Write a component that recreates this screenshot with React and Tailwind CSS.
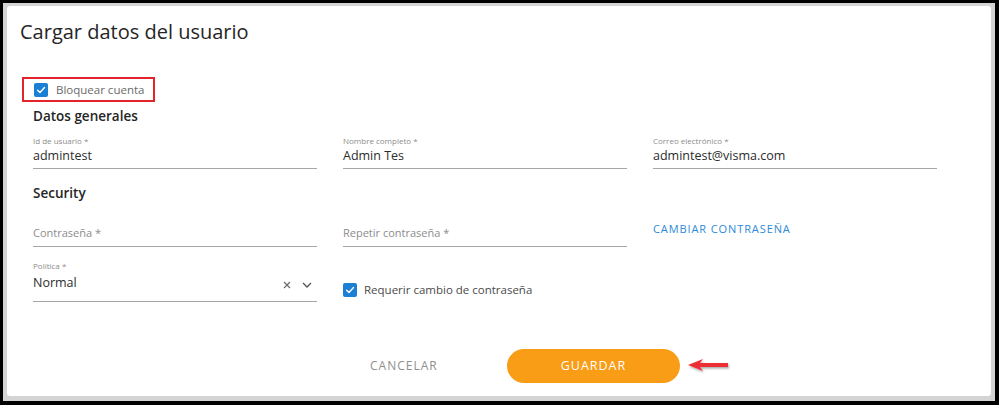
import React from 'react';

const font = { fontFamily: '"Open Sans", "Noto Sans", sans-serif' };

function Check({ className = '' }) {
  return (
    <span className={`flex h-[14px] w-[14px] items-center justify-center rounded-[2px] bg-[#1b7fd4] ${className}`}>
      <svg width="10" height="10" viewBox="0 0 10 10" fill="none">
        <path d="M1.6 5.2 L4 7.4 L8.5 2.6" stroke="white" strokeWidth="1.4" strokeLinecap="round" strokeLinejoin="round" />
      </svg>
    </span>
  );
}

function Field({ label, value }) {
  return (
    <div className="pt-[9px]">
      <div className="h-[12px] text-[8px] leading-[12px] text-[#8c8c8c]">{label}</div>
      <div className="h-[18px] border-b border-[#a6a6a6] pb-[3px] text-[12.5px] leading-[18px] text-[#2c2c2c] box-content">
        {value}
      </div>
    </div>
  );
}

function Placeholder({ text }) {
  return (
    <div className="pt-[21px]">
      <div className="h-[18px] border-b border-[#a6a6a6] pb-[4px] text-[11px] leading-[18px] text-[#8c8c8c] box-content">
        {text}
      </div>
    </div>
  );
}

export default function App() {
  return (
    <div className="h-[405px] w-[999px] bg-black pb-[4px] pl-[3px] pr-[4px] pt-[3px]" style={font}>
      <div className="h-full w-full bg-[#d4d4d4] pb-[5px] pl-[4px] pr-[4px] pt-[3px]">
        <div className="h-full w-full rounded-[3px] bg-white">
          {/* Title */}
          <div className="pl-[13px] pt-[12px] text-[20px] leading-[28px] text-[#252525]">Cargar datos del usuario</div>

          {/* Bloquear cuenta */}
          <div className="ml-[15px] mt-[31px] flex h-[25px] w-[133px] items-center border-2 border-[#e3242b] pl-[10px]">
            <Check />
            <span className="ml-[8px] text-[11.5px] text-[#6a6a6a]">Bloquear cuenta</span>
          </div>

          <div className="pl-[26px]">
            <div className="mt-[4px] h-[20px] text-[13.5px] font-semibold leading-[20px] text-[#252525]">Datos generales</div>

            <div className="grid grid-cols-[284px_284px_284px] gap-x-[26px]">
              <Field label="Id de usuario *" value="admintest" />
              <Field label="Nombre completo *" value="Admin Tes" />
              <Field label="Correo electrónico *" value="admintest@visma.com" />
            </div>

            <div className="mt-[14px] h-[20px] text-[13.5px] font-semibold leading-[20px] text-[#252525]">Security</div>

            <div className="grid grid-cols-[284px_284px_284px] gap-x-[26px]">
              <Placeholder text="Contraseña *" />
              <Placeholder text="Repetir contraseña *" />
              <div className="pt-[17px] text-[11px] leading-[18px] tracking-[0.9px] text-[#2e8ad8]">CAMBIAR CONTRASEÑA</div>
            </div>

            <div className="grid grid-cols-[284px_284px_284px] gap-x-[26px]">
              <div className="pt-[13px]">
                <div className="h-[12px] text-[8px] leading-[12px] text-[#8c8c8c]">Política *</div>
                <div className="mt-[2px] flex h-[18px] items-center border-b border-[#a6a6a6] pb-[9px] box-content">
                  <span className="flex-1 text-[12.5px] leading-[18px] text-[#2c2c2c]">Normal</span>
                  <svg width="8" height="8" viewBox="0 0 8 8" className="mr-[11px] mt-[4px]">
                    <path d="M1 1 L7 7 M7 1 L1 7" stroke="#6b6b6b" strokeWidth="1.2" />
                  </svg>
                  <svg width="10" height="6" viewBox="0 0 10 6" className="mr-[5px] mt-[3px]">
                    <path d="M1 1 L5 5 L9 1" stroke="#555" strokeWidth="1.3" fill="none" />
                  </svg>
                </div>
              </div>
              <div className="flex items-start pt-[36px]">
                <Check />
                <span className="ml-[7px] text-[11.5px] leading-[14px] text-[#4a4a4a]">Requerir cambio de contraseña</span>
              </div>
              <div />
            </div>
          </div>

          {/* Buttons */}
          <div className="mt-[47px] flex items-center pl-[363px]">
            <span className="w-[92px] text-[12px] tracking-[1px] text-[#8f8f8f]">CANCELAR</span>
            <button className="ml-[45px] h-[34px] w-[173px] rounded-full bg-[#f99c16] text-[12.5px] font-medium tracking-[1px] text-white">
              GUARDAR
            </button>
            <svg width="46" height="16" viewBox="0 0 46 16" className="ml-[6px]">
              <defs>
                <filter id="sh" x="-20%" y="-40%" width="140%" height="180%">
                  <feDropShadow dx="1" dy="1.5" stdDeviation="0.8" floodColor="#000" floodOpacity="0.35" />
                </filter>
              </defs>
              <path d="M2 7 L17 1 L14 5 L42 5 L42 9 L14 9 L17 13 Z" fill="#ee2f36" filter="url(#sh)" />
            </svg>
          </div>
        </div>
      </div>
    </div>
  );
}
